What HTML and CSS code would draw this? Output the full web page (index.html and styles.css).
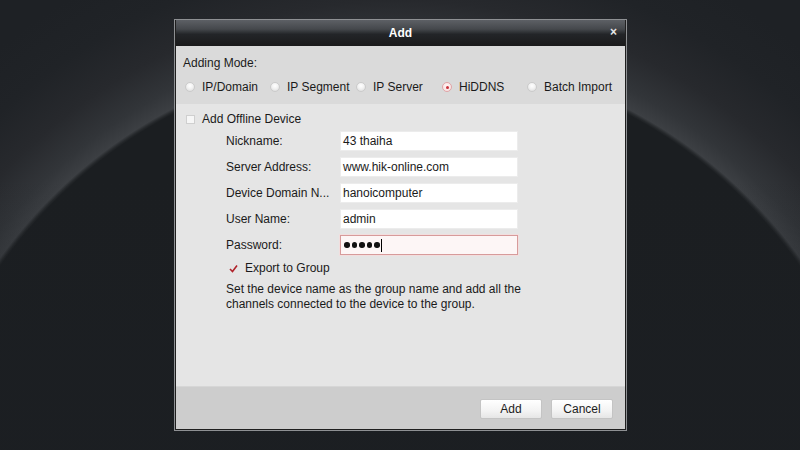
FILE: index.html
```html
<!DOCTYPE html>
<html>
<head>
<meta charset="utf-8">
<link rel="stylesheet" href="styles.css">
</head>
<body>
<div class="dialog">
  <div class="titlebar">
    <span class="title">Add</span>
    <span class="close">×</span>
  </div>
  <div class="mode">
    <div class="mode-label">Adding Mode:</div>
    <div class="opts">
      <label class="opt"><span class="radio"></span><span>IP/Domain</span></label>
      <label class="opt"><span class="radio"></span><span>IP Segment</span></label>
      <label class="opt"><span class="radio"></span><span>IP Server</span></label>
      <label class="opt"><span class="radio on"></span><span>HiDDNS</span></label>
      <label class="opt"><span class="radio"></span><span>Batch Import</span></label>
    </div>
  </div>
  <div class="main">
    <div class="offline"><span class="cbox"></span><span>Add Offline Device</span></div>
    <div class="form">
      <div class="row"><span class="lbl">Nickname:</span><div class="inp">43 thaiha</div></div>
      <div class="row"><span class="lbl">Server Address:</span><div class="inp">www.hik-online.com</div></div>
      <div class="row"><span class="lbl">Device Domain N...</span><div class="inp">hanoicomputer</div></div>
      <div class="row"><span class="lbl">User Name:</span><div class="inp">admin</div></div>
      <div class="row pw"><span class="lbl">Password:</span><div class="inp err"><span class="dots"><i class="dot"></i><i class="dot"></i><i class="dot"></i><i class="dot"></i><i class="dot"></i></span><span class="caret"></span></div></div>
      <div class="export"><svg class="check" width="9" height="9" viewBox="0 0 9 9"><path d="M1 5 L3.5 7.5 L8 1.5" fill="none" stroke="#b0222a" stroke-width="1.6"/></svg><span>Export to Group</span></div>
      <p class="desc">Set the device name as the group name and add all the<br>channels connected to the device to the group.</p>
    </div>
  </div>
  <div class="footer">
    <button class="btn">Add</button>
    <button class="btn">Cancel</button>
  </div>
</div>
</body>
</html>
```
FILE: styles.css
```css
html, body {
  margin: 0;
  padding: 0;
}
body {
  width: 800px;
  height: 450px;
  overflow: hidden;
  font-family: "Liberation Sans", Arial, sans-serif;
  font-size: 12px;
  color: #1a1a1a;
  background:
    linear-gradient(rgba(28,31,35,0) 40%, rgba(28,31,35,0.45) 75%, rgba(28,31,35,0.6) 100%),
    radial-gradient(circle 640px at 400px 546px, #1b1e21 0, #1b1e21 488px, #25282b 490px, #3c3f43 493px, #323539 510px, #27292d 545px, #202327 590px, #1e2125 640px);
  display: flex;
  align-items: flex-start;
}
.dialog {
  margin: 19px 0 0 174px;
  width: 453px;
  height: 412px;
  box-sizing: border-box;
  border: 1px solid #8e9093;
  background: #1f1f1f;
  padding: 0 1px 1px 1px;
  display: flex;
  flex-direction: column;
}
.titlebar {
  height: 26px;
  background: linear-gradient(#5d6065 0, #45484c 35%, #232528 55%, #1a1a1b 100%);
  position: relative;
  display: flex;
  align-items: center;
  justify-content: center;
}
.title {
  color: #fff;
  font-weight: bold;
  font-size: 12px;
}
.close {
  position: absolute;
  right: 8px;
  top: 5px;
  color: #e8e8e8;
  font-weight: bold;
  font-size: 12px;
}
.mode {
  background: #dadada;
  height: 58px;
  box-sizing: border-box;
  padding: 10px 0 0 7px;
}
.mode-label {
  line-height: 14px;
}
.opts {
  display: flex;
  margin-top: 10px;
  padding-left: 2px;
}
.opt {
  width: 85px;
  display: flex;
  align-items: center;
  gap: 7px;
  line-height: 14px;
  font-size: 12px;
  white-space: nowrap;
}
.opt:nth-child(2), .opt:nth-child(3) { width: 86px; }
.radio {
  width: 10px;
  height: 10px;
  border-radius: 50%;
  box-sizing: border-box;
  border: 1px solid #cbcbcb;
  background: radial-gradient(circle at 50% 35%, #ffffff 0, #f2f2f2 45%, #d6d6d6 100%);
  position: relative;
  flex: none;
}
.radio.on {
  border-color: #e0a5a8;
  background: radial-gradient(circle at 50% 40%, #fff6f6 0, #f7dcdc 100%);
}
.radio.on::after {
  content: "";
  position: absolute;
  left: 2.5px;
  top: 2.5px;
  width: 3px;
  height: 3px;
  border-radius: 50%;
  background: #c8303a;
}
.main {
  background: #e5e5e5;
  flex: 1;
  padding: 8px 0 0 10px;
}
.offline {
  display: flex;
  align-items: center;
  gap: 7px;
  line-height: 14px;
}
.cbox {
  width: 9px;
  height: 9px;
  box-sizing: border-box;
  border: 1px solid #cfcfcf;
  background: #f6f6f6;
}
.form {
  padding-left: 40px;
  margin-top: 5px;
}
.row {
  display: flex;
  align-items: center;
  height: 20px;
  margin-bottom: 6px;
}
.row.pw { margin-top: 3px; }
.lbl {
  width: 114px;
}
.inp {
  width: 178px;
  height: 20px;
  box-sizing: border-box;
  background: #ffffff;
  border: 1px solid #ececec;
  padding: 0 2px;
  display: flex;
  align-items: center;
}
.inp.err {
  border: 1px solid #d79b9b;
  background: #fdf6f6;
  box-shadow: 0 0 0 1px #f2dede;
  padding-left: 3px;
}
.dots {
  display: flex;
  gap: 2px;
}
.dot {
  width: 5.5px;
  height: 5.5px;
  border-radius: 50%;
  background: #111;
}
.caret {
  width: 1px;
  height: 13px;
  background: #000;
  margin-left: 1px;
}
.export {
  display: flex;
  align-items: center;
  gap: 7px;
  margin: 5px 0 0 3px;
  line-height: 14px;
}
.check { flex: none; }
.desc {
  margin: 7px 0 0 0;
  line-height: 15px;
}
.footer {
  height: 42px;
  background: #cdcdcd;
  display: flex;
  justify-content: flex-end;
  align-items: center;
  gap: 9px;
  padding-right: 12px;
  border-top: 1px solid #d6d6d6;
}
.btn {
  width: 62px;
  height: 20px;
  font-family: "Liberation Sans", Arial, sans-serif;
  font-size: 12px;
  color: #1c1c1c;
  border: 1px solid #c4c4c4;
  border-radius: 2px;
  background: linear-gradient(#ffffff, #f3f3f3 60%, #e6e6e6);
  padding: 0;
  margin-top: 2px;
}
```
